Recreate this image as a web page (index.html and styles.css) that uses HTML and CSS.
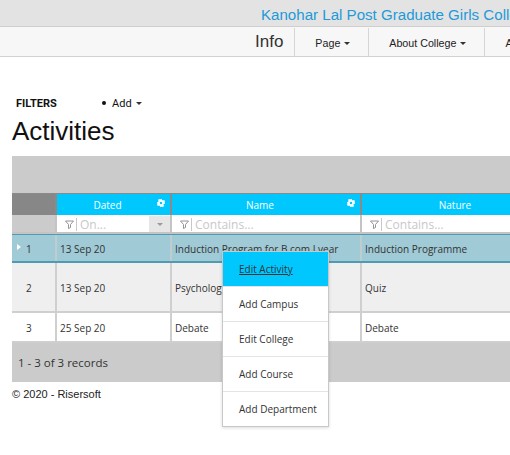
FILE: index.html
```html
<!DOCTYPE html>
<html>
<head>
<meta charset="utf-8">
<link rel="stylesheet" href="styles.css">
</head>
<body>
<div class="topbar"><span class="title">Kanohar Lal Post Graduate Girls College</span></div>
<div class="navbar">
  <span class="brand">Info</span>
  <span class="navitem">Page <span class="caret"></span></span>
  <span class="navitem">About College <span class="caret"></span></span>
  <span class="navitem">Academics <span class="caret"></span></span>
</div>
<div class="content">
  <div class="toolbar">
    <span class="filters">FILTERS</span>
    <ul class="addlist"><li>Add <span class="caret"></span></li></ul>
  </div>
  <h1 class="pagetitle">Activities</h1>
  <div class="grid">
    <div class="groupband"></div>
    <div class="row header">
      <div class="cell ind"></div>
      <div class="cell c1">Dated<svg class="gear" viewBox="0 0 10 10"><path d="M4 0h2l.3 1.4 1.2.6 1.2-.8 1.4 1.4-.8 1.2.6 1.2L10 4v2l-1.4.3-.6 1.2.8 1.2-1.4 1.4-1.2-.8-1.2.6L6 10H4l-.3-1.4-1.2-.6-1.2.8L-.1 7.4l.8-1.2L.1 5 0 6V4l1.4-.3.6-1.2-.8-1.2L2.6-.1l1.2.8 1.2-.6z" fill="#fff"/><circle cx="5" cy="5" r="1.6" fill="#00c8ff"/></svg></div>
      <div class="cell c2">Name<svg class="gear" viewBox="0 0 10 10"><path d="M4 0h2l.3 1.4 1.2.6 1.2-.8 1.4 1.4-.8 1.2.6 1.2L10 4v2l-1.4.3-.6 1.2.8 1.2-1.4 1.4-1.2-.8-1.2.6L6 10H4l-.3-1.4-1.2-.6-1.2.8L-.1 7.4l.8-1.2L.1 5 0 6V4l1.4-.3.6-1.2-.8-1.2L2.6-.1l1.2.8 1.2-.6z" fill="#fff"/><circle cx="5" cy="5" r="1.6" fill="#00c8ff"/></svg></div>
      <div class="cell c3">Nature</div>
    </div>
    <div class="row filter">
      <div class="cell ind"></div>
      <div class="cell c1"><div class="fbox"><svg class="funnel" viewBox="0 0 9 9"><path d="M0.5 1h8l-3 3.5v3l-2 1v-4z" fill="none" stroke="#888" stroke-width="0.9"/></svg><span class="ph">On...</span></div><div class="ddbtn"><span class="ddcaret"></span></div></div>
      <div class="cell c2"><div class="fbox"><svg class="funnel" viewBox="0 0 9 9"><path d="M0.5 1h8l-3 3.5v3l-2 1v-4z" fill="none" stroke="#888" stroke-width="0.9"/></svg><span class="ph">Contains...</span></div></div>
      <div class="cell c3"><div class="fbox"><svg class="funnel" viewBox="0 0 9 9"><path d="M0.5 1h8l-3 3.5v3l-2 1v-4z" fill="none" stroke="#888" stroke-width="0.9"/></svg><span class="ph">Contains...</span></div></div>
    </div>
    <div class="row data sel">
      <div class="cell ind"><span class="tri"></span>1</div>
      <div class="cell c1">13 Sep 20</div>
      <div class="cell c2">Induction Program for B.com I year</div>
      <div class="cell c3">Induction Programme</div>
    </div>
    <div class="row data alt tall">
      <div class="cell ind">2</div>
      <div class="cell c1">13 Sep 20</div>
      <div class="cell c2">Psychology</div>
      <div class="cell c3">Quiz</div>
    </div>
    <div class="row data">
      <div class="cell ind">3</div>
      <div class="cell c1">25 Sep 20</div>
      <div class="cell c2">Debate</div>
      <div class="cell c3">Debate</div>
    </div>
    <div class="gridfoot">1 - 3 of 3 records</div>
  </div>
  <div class="copyright">© 2020 - Risersoft</div>
</div>
<ul class="ctxmenu">
  <li class="active"><span>Edit Activity</span></li>
  <li><span>Add Campus</span></li>
  <li><span>Edit College</span></li>
  <li><span>Add Course</span></li>
  <li><span>Add Department</span></li>
</ul>
</body>
</html>
```

FILE: styles.css
```css
* { box-sizing: border-box; }
html, body { margin: 0; padding: 0; overflow: hidden; }
body { width: 510px; height: 455px; background: #fff; font-family: "Liberation Sans", Arial, sans-serif; color: #222; position: relative; }

.topbar { height: 27px; background: #e3e3e3; border-bottom: 1px solid #cfcfcf; padding-left: 261px; white-space: nowrap; overflow: hidden; }
.title { color: #1e9ad8; font-size: 15.1px; line-height: 27px; display: inline-block; padding-top: 1px; }

.navbar { height: 30px; background: #f7f7f7; border-bottom: 1px solid #d2d2d2; display: flex; align-items: stretch; padding-left: 255px; white-space: nowrap; overflow: hidden; }
.brand { font-size: 17px; color: #333; line-height: 28px; padding-right: 11px; border-right: 1px solid #d6d6d6; margin-top: 1px; }
.navitem { font-size: 10.7px; color: #222; line-height: 28px; padding: 1px 18px 0 20px; border-right: 1px solid #d6d6d6; margin-top: 1px; flex: none; }
.caret { display: inline-block; width: 0; height: 0; border-left: 3.5px solid transparent; border-right: 3.5px solid transparent; border-top: 3.5px solid #333; vertical-align: middle; margin-left: 1px; margin-top: -2px; }

.content { padding: 0 0 0 12px; }
.toolbar { display: flex; align-items: center; height: 16px; margin-top: 38px; }
.filters { font-family: Roboto, "Liberation Sans", sans-serif; font-weight: bold; font-size: 11px; color: #111; margin-left: 4px; width: 85px; }
.addlist { margin: 0 0 0 1px; padding: 0; list-style: none; font-family: Roboto, sans-serif; font-size: 11px; color: #111; }
.addlist li { display: flex; align-items: center; }
.addlist li::before { content: ""; width: 4px; height: 4px; border-radius: 50%; background: #111; margin-right: 6px; }
.addlist .caret { margin-left: 4px; margin-top: 1px; }
.pagetitle { font-family: "Liberation Sans", Arial, sans-serif; font-weight: normal; font-size: 26px; color: #111; margin: 3px 0 0 0; line-height: 34px; }

.grid { margin-top: 8px; font-family: "Open Sans", sans-serif; font-size: 10px; color: #333; overflow: hidden; }
.groupband { height: 37px; background: #cbcbcb; }
.row { display: flex; }
.cell { flex: none; position: relative; display: flex; align-items: center; }
.ind { width: 43px; }
.c1 { width: 115px; }
.c2 { width: 190px; }
.c3 { width: 200px; }

.header { height: 22px; background: #00c8ff; border-top: 1px solid #8a8a8a; }
.header .cell { color: #fff; justify-content: center; border-left: 2px solid #8a8a8a; height: 21px; padding-right: 12px; }
.header .ind { background: #878787; border-left: none; }
.gear { position: absolute; right: 5px; top: 5px; width: 8px; height: 8px; }

.filter { height: 19px; background: #fff; border-bottom: 2px solid #c4c4c4; }
.filter .cell { border-left: 2px solid #c4c4c4; padding: 1px 0 0 2px; }
.filter .ind { background: #cbcbcb; border-left: none; }
.fbox { flex: 1; display: flex; align-items: center; height: 100%; padding-left: 6px; font-size: 12px; }
.funnel { width: 9px; height: 9px; margin-right: 2px; }
.ph { color: #c8c8c8; border-left: 1px solid #c8c8c8; padding-left: 3px; line-height: 13px; }
.ddbtn { width: 21px; height: 100%; background: #e6e6e6; display: flex; align-items: center; justify-content: center; }
.ddcaret { width: 0; height: 0; border-left: 3px solid transparent; border-right: 3px solid transparent; border-top: 3px solid #999; }

.data { border-bottom: 2px solid #cfcfcf; height: 30px; background: #fff; }
.data .cell { border-left: 2px solid #cfcfcf; padding-left: 3px; padding-top: 1px; }
.data .ind { border-left: none; padding-left: 14px; }
.data.sel { background: #9fcad6; border-top: 1px solid #4f9cb2; border-bottom-color: #4f9cb2; height: 29px; }
.data.sel .cell { border-left-color: #bfcdd1; }
.data.alt { background: #efefef; }
.data.tall { height: 50px; }
.tri { position: absolute; left: 5px; top: 9px; width: 0; height: 0; border-top: 3px solid transparent; border-bottom: 3px solid transparent; border-left: 4px solid #fff; }
.sel .ind { padding-left: 14px; }

.gridfoot { height: 39px; background: #cbcbcb; font-size: 11.5px; padding-left: 6px; display: flex; align-items: center; color: #333; }
.copyright { font-size: 11px; color: #222; margin-top: 6px; }

.ctxmenu { position: absolute; left: 222px; top: 251px; width: 107px; margin: 0; padding: 0; list-style: none; background: #fff; border: 1px solid #c8c8c8; box-shadow: 0 1px 3px rgba(0,0,0,.15); font-family: "Open Sans", sans-serif; font-size: 10px; color: #333; }
.ctxmenu li { height: 35px; display: flex; align-items: center; padding-left: 16px; border-top: 1px solid #e4e4e4; }
.ctxmenu li:first-child { border-top: none; height: 34px; }
.ctxmenu li.active { background: #00c8ff; }
.ctxmenu li.active span { text-decoration: underline; }
```
